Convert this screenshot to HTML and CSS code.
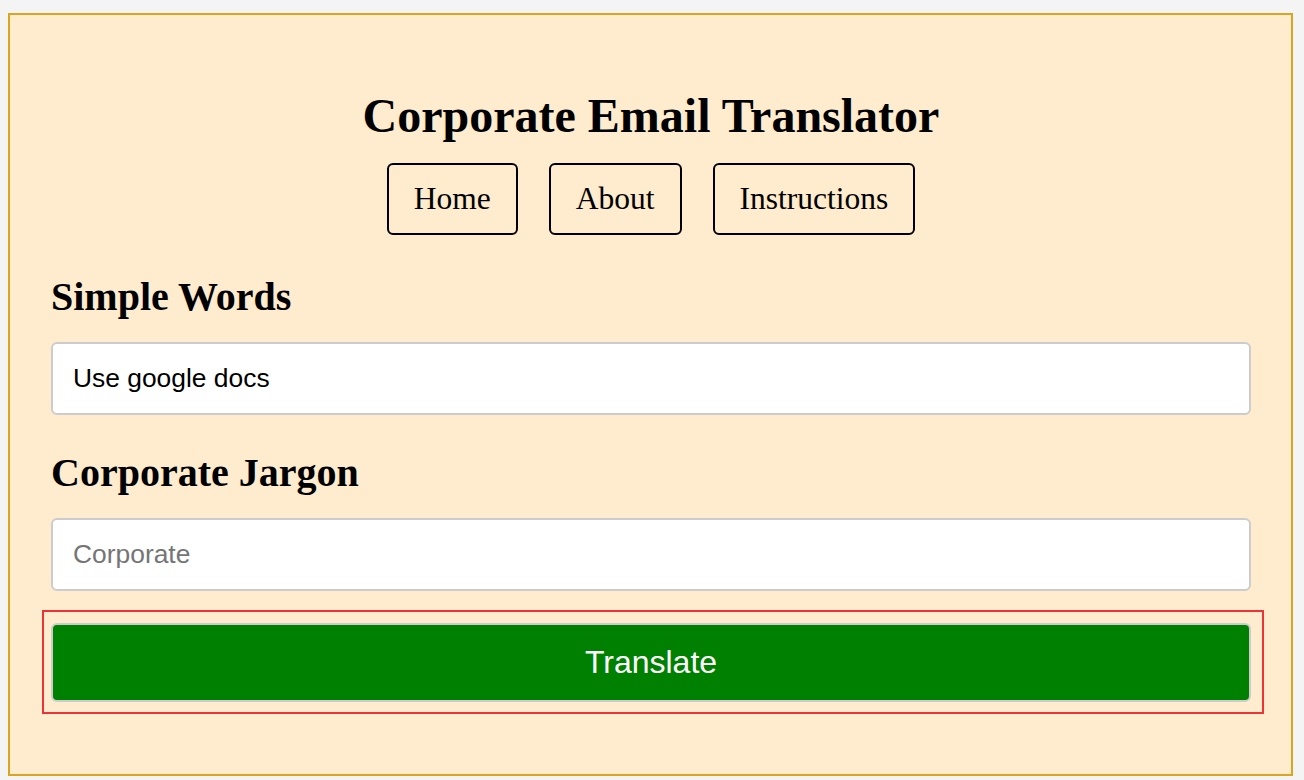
FILE: index.html
```html
<!DOCTYPE html>
<html lang="en">
<head>
<meta charset="utf-8">
<title>Corporate Email Translator</title>
<link rel="stylesheet" href="styles.css">
</head>
<body>
  <div class="app">
    <h1 class="title">Corporate Email Translator</h1>
    <nav class="nav">
      <a class="nav-btn" href="#">Home</a>
      <a class="nav-btn" href="#">About</a>
      <a class="nav-btn" href="#">Instructions</a>
    </nav>
    <h2 class="label label-first">Simple Words</h2>
    <input class="field" type="text" value="Use google docs">
    <h2 class="label label-second">Corporate Jargon</h2>
    <input class="field" type="text" placeholder="Corporate">
    <div class="action">
      <button class="translate" type="button">Translate</button>
    </div>
  </div>
</body>
</html>
```

FILE: styles.css
```css
html, body {
  margin: 0;
  padding: 0;
}

body {
  background: #f4f4f4;
  font-family: "Liberation Serif", "Times New Roman", serif;
}

.app {
  margin: 13px 11px 0 8px;
  border: 2px solid #daa520;
  background: #ffebcd;
  padding: 73px 40px 60px 41px;
  display: flex;
  flex-direction: column;
}

.title {
  margin: 0;
  font-size: 48px;
  line-height: 56px;
  font-weight: bold;
  text-align: center;
  color: #000;
}

.nav {
  margin-top: 19px;
  display: flex;
  justify-content: center;
  gap: 31px;
}

.nav-btn {
  display: block;
  border: 2px solid #000;
  border-radius: 6px;
  padding: 17px 25px;
  font-size: 31.5px;
  line-height: 34px;
  color: #000;
  text-decoration: none;
}

.label {
  margin: 0;
  font-size: 40px;
  line-height: 46px;
  font-weight: bold;
  color: #000;
}

.label-first {
  margin-top: 39px;
}

.label-second {
  margin-top: 35px;
}

.field {
  margin-top: 22px;
  box-sizing: border-box;
  width: 100%;
  height: 73px;
  border: 2px solid #cccccc;
  border-radius: 6px;
  background: #fff;
  padding: 0 20px;
  font-family: "Liberation Sans", Arial, sans-serif;
  font-size: 26.4px;
  color: #000;
  outline: none;
}

.field::placeholder {
  color: #757575;
}

.action {
  margin: 19px -13px 0 -9px;
  border: 2px solid #ec3338;
  padding: 11px 11px 10px 7px;
}

.translate {
  display: block;
  box-sizing: border-box;
  width: 100%;
  height: 79px;
  border: 2px solid #cccccc;
  border-radius: 6px;
  background: #008000;
  color: #fff;
  font-family: "Liberation Sans", Arial, sans-serif;
  font-size: 32px;
  padding: 0;
  cursor: pointer;
}
```
